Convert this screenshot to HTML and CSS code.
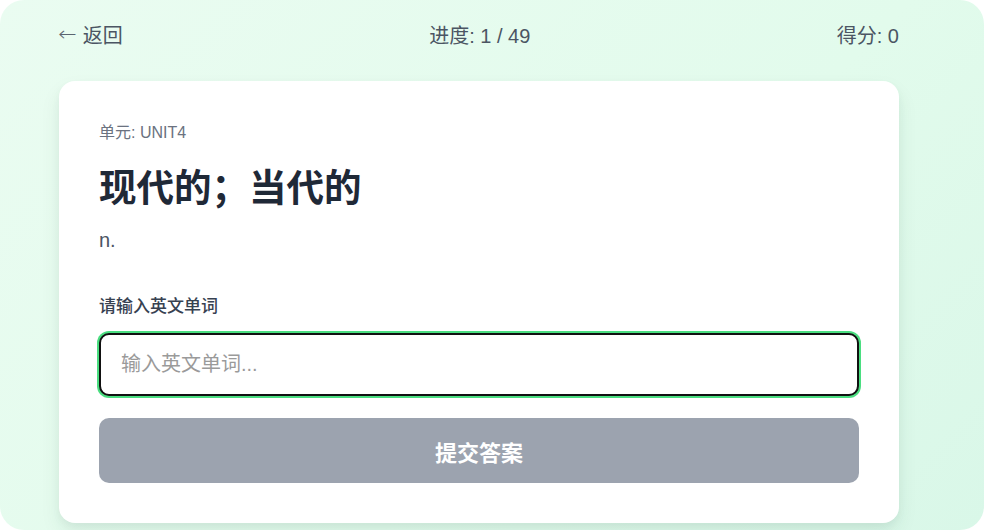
FILE: index.html
```html
<!DOCTYPE html>
<html lang="zh-CN">
<head>
    <meta charset="UTF-8">
    <meta name="viewport" content="width=device-width, initial-scale=1.0">
    <title>单词拼写</title>
    <link rel="stylesheet" href="styles.css">
</head>
<body>
    <div class="app">
        <div class="topbar">
            <a class="back" href="#"><span class="arrow">←</span>返回</a>
            <div class="progress">进度: 1 / 49</div>
            <div class="score">得分: 0</div>
        </div>

        <div class="card">
            <div class="unit">单元: UNIT4</div>
            <h1 class="meaning">现代的；当代的</h1>
            <div class="pos">n.</div>

            <label class="input-label" for="answer">请输入英文单词</label>
            <input id="answer" class="answer-input" type="text" placeholder="输入英文单词...">

            <button class="submit-btn" disabled>提交答案</button>
        </div>
    </div>
</body>
</html>
```

FILE: styles.css
```css
* {
    box-sizing: border-box;
}

body {
    margin: 0;
    background-color: #ffffff;
    font-family: "Liberation Sans", "Noto Sans CJK SC", sans-serif;
}

.app {
    width: 984px;
    height: 530px;
    padding: 0 0 0 59px;
    border-radius: 24px;
    background: linear-gradient(135deg, #eafcf1 0%, #e2fbec 60%, #d9f7e8 100%);
    overflow: hidden;
}

.topbar {
    width: 840px;
    height: 72px;
    padding-bottom: 4px;
    display: flex;
    align-items: center;
    justify-content: space-between;
    font-size: 20px;
    color: #4b5563;
}

.back {
    display: flex;
    align-items: center;
    color: #4b5563;
    text-decoration: none;
}

.arrow {
    font-family: "DejaVu Sans", sans-serif;
    font-size: 20px;
    font-weight: 300;
    margin-right: 7px;
    color: #5b6470;
    transform: scaleX(1.1);
}

.card {
    width: 840px;
    margin-top: 9px;
    padding: 40px;
    background-color: #ffffff;
    border-radius: 16px;
    box-shadow: 0 10px 20px rgba(16, 80, 50, 0.08), 0 4px 8px rgba(0, 0, 0, 0.04);
}

.unit {
    font-size: 16px;
    line-height: 24px;
    color: #6b7280;
}

.meaning {
    margin: 21px 0 0;
    font-size: 37.5px;
    line-height: 44px;
    font-weight: 700;
    color: #1f2937;
}

.pos {
    margin-top: 16px;
    font-size: 20px;
    line-height: 28px;
    color: #4b5563;
}

.input-label {
    display: block;
    margin-top: 42px;
    font-size: 17px;
    line-height: 22px;
    font-weight: 500;
    color: #374151;
}

.answer-input {
    display: block;
    width: 100%;
    height: 63px;
    margin-top: 15px;
    padding: 0 20px;
    border: 2px solid #111111;
    border-radius: 10px;
    box-shadow: 0 0 0 2px #4ade80;
    font-family: inherit;
    font-size: 20px;
    color: #1f2937;
    outline: none;
}

.answer-input::placeholder {
    color: #9a9a9a;
}

.submit-btn {
    display: block;
    width: 100%;
    height: 65px;
    margin-top: 22px;
    border: none;
    border-radius: 10px;
    background-color: #9ca3af;
    color: #ffffff;
    font-family: inherit;
    font-size: 22px;
    font-weight: 700;
}
```
